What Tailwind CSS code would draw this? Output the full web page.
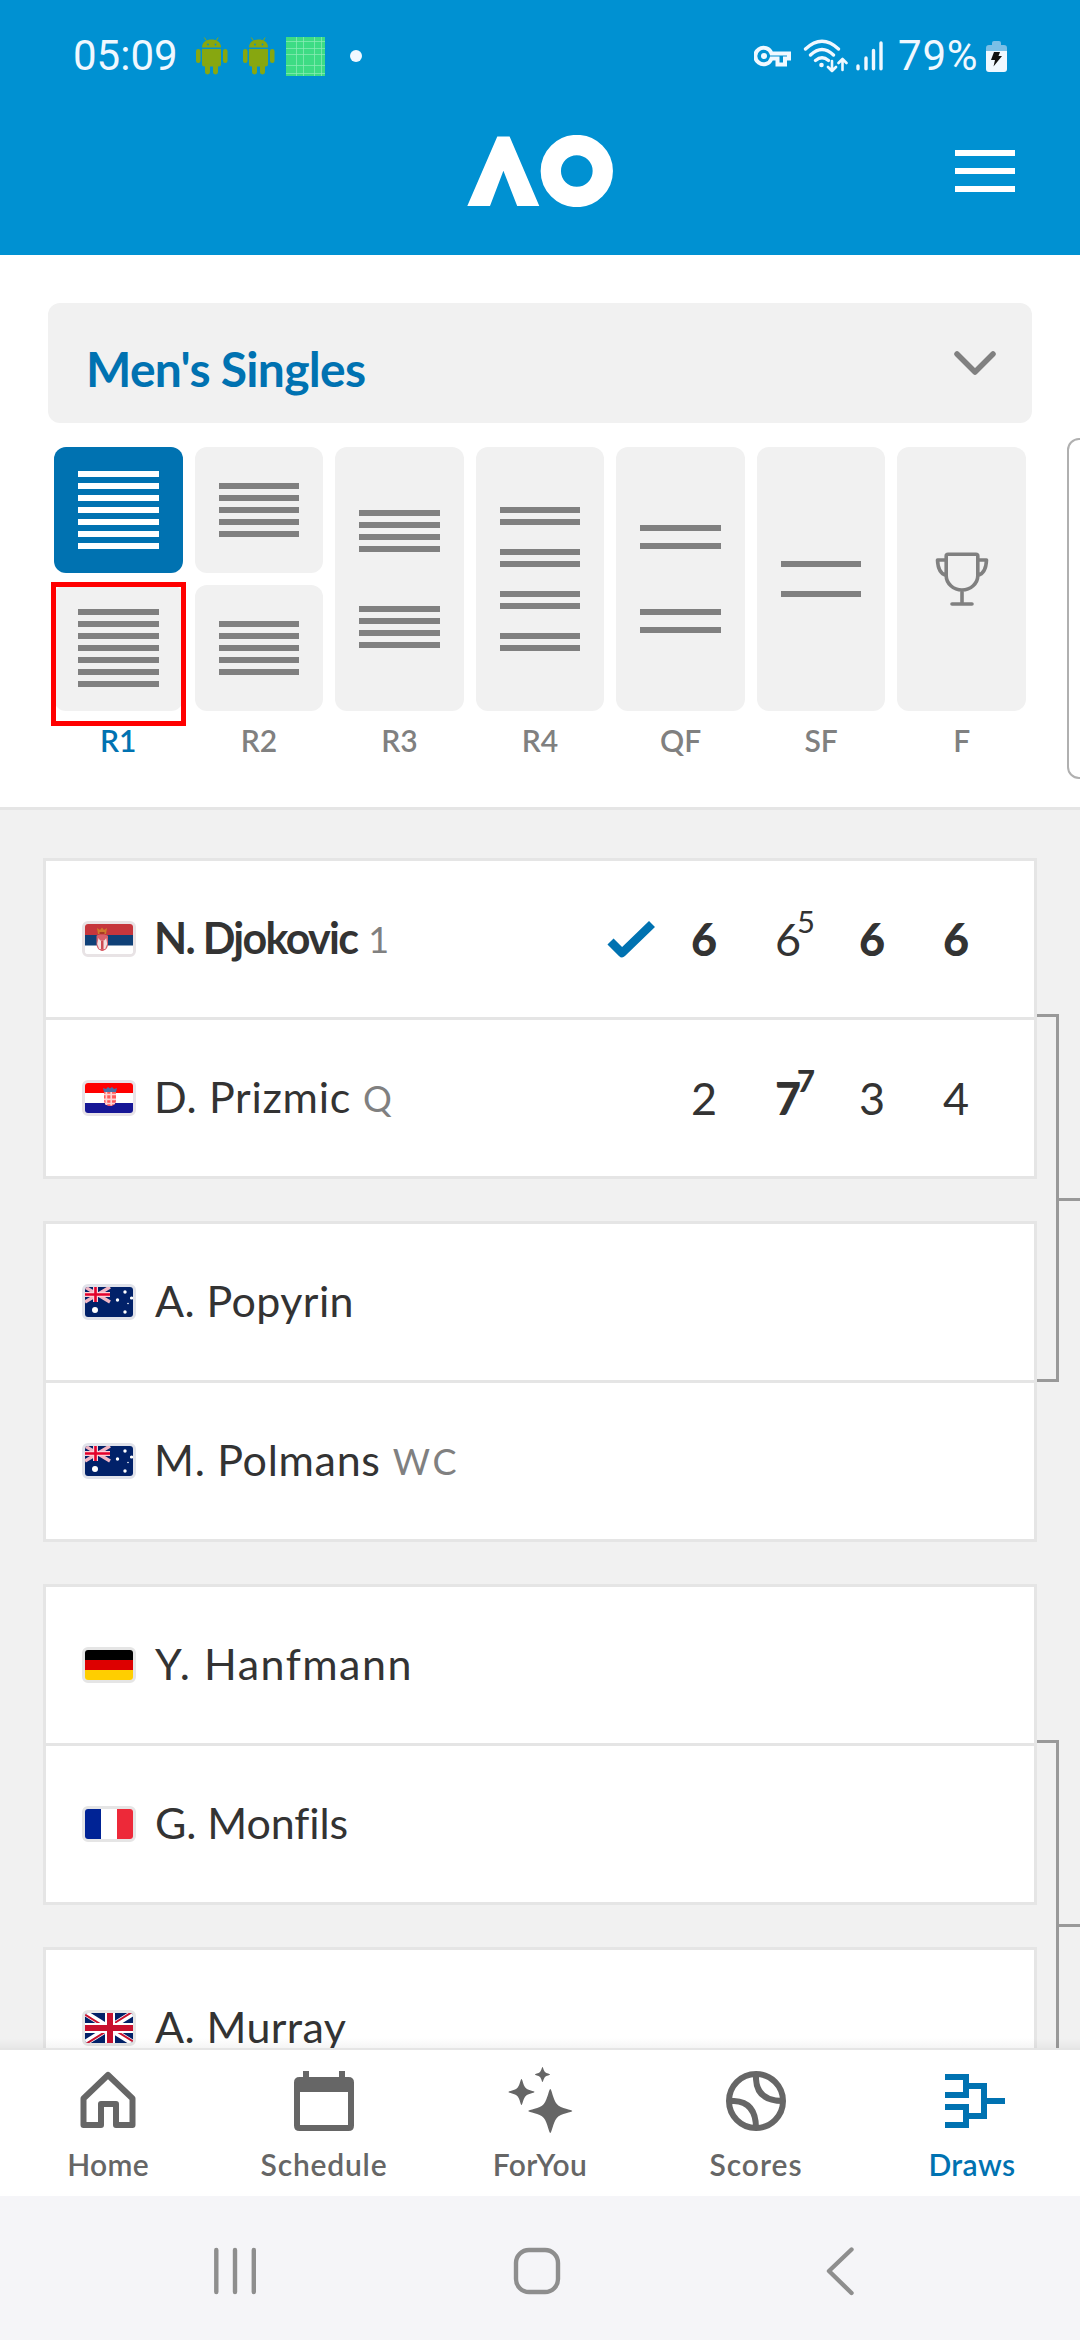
<!DOCTYPE html>
<html lang="en">
<head>
<meta charset="utf-8">
<title>Draws</title>
<script src="https://cdn.jsdelivr.net/npm/@tailwindcss/browser@4"></script>
</head>
<body class="w-[1080px] h-[2340px] overflow-hidden bg-white font-['Lato',sans-serif] text-[#333333] flex flex-col">
<svg class="hidden">
  <defs>
    <clipPath id="r"><rect width="48" height="30" rx="3"/></clipPath>
    <symbol id="srb" viewBox="0 0 48 30"><g clip-path="url(#r)"><path fill="#fff" d="M0 0h48v30H0z"/><path fill="#c6363c" d="M0 0h48v11H0z"/><path fill="#0f4077" d="M0 11h48v10.500H0z"/><path d="M11.500 12c0-2 11-2 11.500 0v8c0 5-4 7-5.700 7s-5.800-2-5.800-7z" fill="#d9606a"/><path d="M13.500 14c1 2 2 3 3.700 3s3-1 4-3l1 6-2 5h-6l-2-5z" fill="#f3dfe0"/><path d="M16 17h2.500v8H16z" fill="#cf4a52"/><path d="M12 4l3 2 2-2.500 2 2.500 3-2-1 6h-8z" fill="#d07a2c"/><path d="M14.500 8h5v2h-5z" fill="#a93a24"/></g></symbol>
    <symbol id="cro" viewBox="0 0 48 30"><g clip-path="url(#r)"><path fill="#fff" d="M0 0h48v30H0z"/><path fill="#f00" d="M0 0h48v10H0z"/><path fill="#171796" d="M0 20h48v10H0z"/><path d="M19 9h12v8c0 4-3 6-6 6s-6-2-6-6z" fill="#ff5a5a"/><path d="M21.400 9v13M26.200 9v13.500M19 11.500h12M19 16.300h12M20 20.500h10" stroke="#ffd2d2" stroke-width="1.700"/><path d="M18 5l3 1 2-2 2 1.500L27 4l2 2 3-1-1 4H19z" fill="#4a6fa5"/></g></symbol>
    <symbol id="uk" viewBox="0 0 48 30"><g clip-path="url(#r)"><path fill="#012169" d="M0 0h48v30H0z"/><path d="M0 0l48 30M48 0L0 30" stroke="#fff" stroke-width="6"/><path d="M0 1.500l24 15M48 28.500l-24-15M0 31.500l24-15M48-1.500l-24 15" stroke="#c8102e" stroke-width="2"/><path d="M25 0v30M0 15h48" stroke="#fff" stroke-width="10"/><path d="M25 0v30M0 15h48" stroke="#c8102e" stroke-width="6"/></g></symbol>
    <symbol id="aus" viewBox="0 0 48 30"><g clip-path="url(#r)"><path fill="#012169" d="M0 0h48v30H0z"/><path d="M0 0l25 15M25 0L0 15" stroke="#f3b6c4" stroke-width="3.400"/><path d="M10.500 0v15M0 7.500h25" stroke="#fbd0d8" stroke-width="5"/><path d="M10.500 0v15M0 7.500h25" stroke="#e4002b" stroke-width="2.600"/><g fill="#fff"><circle cx="10" cy="23" r="3"/><circle cx="40" cy="5" r="1.700"/><circle cx="32.500" cy="13" r="1.700"/><circle cx="46.500" cy="11" r="1.600"/><circle cx="40" cy="25" r="1.700"/><circle cx="43" cy="16.500" r=".8"/></g></g></symbol>
    <symbol id="ger" viewBox="0 0 48 30"><g clip-path="url(#r)"><path d="M0 0h48v10H0z"/><path fill="#d00" d="M0 10h48v10H0z"/><path fill="#ffce00" d="M0 20h48v10H0z"/></g></symbol>
    <symbol id="fra" viewBox="0 0 48 30"><g clip-path="url(#r)"><path fill="#fff" d="M0 0h48v30H0z"/><path fill="#002395" d="M0 0h16v30H0z"/><path fill="#ed2939" d="M32 0h16v30H32z"/></g></symbol>
    <symbol id="droid" viewBox="0 0 33 38"><g fill="#87a710"><path d="M7 10.500C7 5 11.500 2.500 16.500 2.500S26 5 26 10.500z"/><path d="M9.300.5l2.200 3.300M23.200.5L21 3.800" stroke="#87a710"/><path d="M7 12h19v15a2.500 2.500 0 0 1-2.500 2.500h-14A2.500 2.500 0 0 1 7 27z"/><rect x="1" y="12" width="4.500" height="14" rx="2.200"/><rect x="28" y="12" width="4.500" height="14" rx="2.200"/><rect x="10" y="26" width="5" height="11.500" rx="2.400"/><rect x="18" y="26" width="5" height="11.500" rx="2.400"/></g><g fill="#0091d2"><circle cx="13" cy="7.500" r=".9"/><circle cx="20.500" cy="7.500" r=".9"/></g></symbol>
  </defs>
</svg>

<!-- Status bar and app header -->
<header class="h-[255px] shrink-0 bg-[#0091d2] flex flex-col">
  <div class="h-28 flex items-center pl-[73px] pr-[73px] font-['Roboto',sans-serif] text-[42px] leading-none text-[#f0f8ff]">
    <span class="w-[105px]">05:09</span>
    <svg class="w-[33px] h-[38px] ml-[17px]"><use href="#droid"/></svg>
    <svg class="w-[33px] h-[38px] ml-[14px]"><use href="#droid"/></svg>
    <svg class="w-[39px] h-[39px] ml-[11px]" viewBox="0 0 39 39"><path fill="#3ddc84" d="M0 0h39v39H0z"/><path d="M10.500 0v39M17.500 0v39M28.500 0v39M35.500 0v39M0 11.500h39M0 17.500h39M0 28.500h39M0 36.500h39M0 4.500h39" stroke="#8fecb8" stroke-width=".7"/></svg>
    <span class="w-3 h-3 rounded-full bg-[#f0f8ff] ml-[25px]"></span>
    <svg class="w-[37px] h-[22px] ml-auto" viewBox="0 0 37 22" fill="none" stroke="#f0f8ff" stroke-width="4"><path d="M17.500 8.500A8.300 8.300 0 1 0 17.500 13.500H23.500V19.500H31V13.500H35V8.500Z"/><circle cx="10" cy="11" r="3" fill="#f0f8ff" stroke="none"/></svg>
    <svg class="w-[45px] h-[34px] ml-[12px]" viewBox="0 0 45 34" fill="none" stroke="#f0f8ff" stroke-linecap="round" stroke-linejoin="round"><path d="M2.500 10Q19-5.500 35.500 10M7.500 16Q19 5 30.500 16M12.500 21.500Q19 16 25.500 21.500" stroke-width="3.300"/><circle cx="18.500" cy="26" r="2.300" fill="#f0f8ff" stroke="none"/><path d="M29 22v10M25 28l4 4 4-4M39.500 31V20M35.500 24l4-4 4 4" stroke-width="2.600"/></svg>
    <svg class="w-[27px] h-[30px] ml-[8px]" viewBox="0 0 27 30" stroke="#f0f8ff" stroke-width="3.400" stroke-linecap="round"><path d="M2 25v2.800M10 17v10.800M17.500 9.500v18.300M25 2v25.800"/></svg>
    <span class="ml-[15px] w-[80px] tracking-[0.8px]">79%</span>
    <svg class="w-[21px] h-[31px] ml-[8px]" viewBox="0 0 21 31"><path d="M6 2q0-2 2-2h5q2 0 2 2v2h3q3 0 3 3v5H0V7q0-3 3-3h3z" fill="#7bbfe6"/><path d="M0 10h21v18q0 3-3 3H3q-3 0-3-3z" fill="#f0f8ff"/><path d="M8 11h6l-1.500 4H16L7.500 25.500 9 19H5z" fill="#111"/></svg>
  </div>
  <div class="h-[143px] flex items-start justify-between pl-[467px] pr-[65px] pt-[23px]">
    <svg class="w-[146px] h-[72px]" viewBox="467 135 146 72" fill="#fff"><path d="M497.300 136.500h12.300L539.300 206H517.200L503.400 170.700 490 206H467.300z"/><circle cx="576.800" cy="171" r="26" fill="none" stroke="#fff" stroke-width="20.300"/></svg>
    <div class="w-[60px] flex flex-col gap-3 pt-[15px]"><i class="h-1.5 bg-white"></i><i class="h-1.5 bg-white"></i><i class="h-1.5 bg-white"></i></div>
  </div>
</header>

<!-- Draw picker -->
<section class="relative h-[555px] shrink-0 bg-white border-b-3 border-[#e5e5e5] px-12 pt-12">
  <div class="h-[120px] rounded-xl bg-[#f1f1f1] flex items-center justify-between pl-[38px] pr-[36px] text-[#0072b1]">
    <span class="text-[48px] font-bold pt-3 leading-none tracking-[-0.7px]">Men's Singles</span>
    <svg class="w-[42px] h-[24px]" viewBox="0 0 42 24" fill="none" stroke="#808080" stroke-width="5.500" stroke-linecap="round" stroke-linejoin="round"><path d="M3 3l18 18L39 3"/></svg>
  </div>
  <div class="mt-6 px-1.5 grid grid-cols-7 gap-3">
    <div class="h-[264px] flex flex-col gap-3">
      <div class="flex-1 rounded-xl bg-[#0072b1] px-6 flex flex-col justify-center gap-1.5"><i class="h-1.5 bg-white"></i><i class="h-1.5 bg-white"></i><i class="h-1.5 bg-white"></i><i class="h-1.5 bg-white"></i><i class="h-1.5 bg-white"></i><i class="h-1.5 bg-white"></i><i class="h-1.5 bg-white"></i></div>
      <div class="relative flex-1 rounded-xl bg-[#f1f1f1] px-6 flex flex-col justify-center gap-1.5"><i class="h-1.5 bg-[#808080]"></i><i class="h-1.5 bg-[#808080]"></i><i class="h-1.5 bg-[#808080]"></i><i class="h-1.5 bg-[#808080]"></i><i class="h-1.5 bg-[#808080]"></i><i class="h-1.5 bg-[#808080]"></i><i class="h-1.5 bg-[#808080]"></i>
        <b class="absolute -left-[3px] -top-[3px] w-[135px] h-[144px] border-5 border-[#ff0000]"></b></div>
    </div>
    <div class="h-[264px] flex flex-col gap-3">
      <div class="flex-1 rounded-xl bg-[#f1f1f1] px-6 flex flex-col justify-center gap-1.5"><i class="h-1.5 bg-[#808080]"></i><i class="h-1.5 bg-[#808080]"></i><i class="h-1.5 bg-[#808080]"></i><i class="h-1.5 bg-[#808080]"></i><i class="h-1.5 bg-[#808080]"></i></div>
      <div class="flex-1 rounded-xl bg-[#f1f1f1] px-6 flex flex-col justify-center gap-1.5"><i class="h-1.5 bg-[#808080]"></i><i class="h-1.5 bg-[#808080]"></i><i class="h-1.5 bg-[#808080]"></i><i class="h-1.5 bg-[#808080]"></i><i class="h-1.5 bg-[#808080]"></i></div>
    </div>
    <div class="h-[264px] rounded-xl bg-[#f1f1f1] px-6 flex flex-col justify-center gap-[54px]">
      <div class="flex flex-col gap-1.5"><i class="h-1.5 bg-[#808080]"></i><i class="h-1.5 bg-[#808080]"></i><i class="h-1.5 bg-[#808080]"></i><i class="h-1.5 bg-[#808080]"></i></div>
      <div class="flex flex-col gap-1.5"><i class="h-1.5 bg-[#808080]"></i><i class="h-1.5 bg-[#808080]"></i><i class="h-1.5 bg-[#808080]"></i><i class="h-1.5 bg-[#808080]"></i></div>
    </div>
    <div class="h-[264px] rounded-xl bg-[#f1f1f1] px-6 flex flex-col justify-center gap-6">
      <div class="h-[18px] border-y-6 border-[#808080]"></div><div class="h-[18px] border-y-6 border-[#808080]"></div><div class="h-[18px] border-y-6 border-[#808080]"></div><div class="h-[18px] border-y-6 border-[#808080]"></div>
    </div>
    <div class="h-[264px] rounded-xl bg-[#f1f1f1] px-6 flex flex-col justify-center gap-[60px]">
      <div class="h-6 border-y-6 border-[#808080]"></div><div class="h-6 border-y-6 border-[#808080]"></div>
    </div>
    <div class="h-[264px] rounded-xl bg-[#f1f1f1] px-6 flex flex-col justify-center"><div class="h-9 border-y-6 border-[#808080]"></div></div>
    <div class="h-[264px] rounded-xl bg-[#f1f1f1] flex items-center justify-center">
      <svg class="w-[54px] h-[54px]" viewBox="0 0 54 54" fill="none" stroke="#808080" stroke-width="3.600" stroke-linecap="round" stroke-linejoin="round"><path d="M13 2.300h28q1.800 0 1.800 1.800v19.400a15.800 14.500 0 0 1-31.600 0V4.100q0-1.800 1.800-1.800zM11 8H2.500c.3 8 3 14 8.700 15.500M43 8h8.500c-.3 8-3 14-8.700 15.500M27 38v14M17 52h20"/></svg>
    </div>
  </div>
  <div class="mt-[11px] px-1.5 grid grid-cols-7 gap-3 text-center text-[30px] leading-[36px] font-semibold text-[#808080]">
    <span class="text-[#0072b1]">R1</span><span>R2</span><span>R3</span><span>R4</span><span>QF</span><span>SF</span><span>F</span>
  </div>
  <div class="absolute left-[1067px] top-[183px] w-10 h-[341px] rounded-xl border-2 border-[#b0b0b0]"></div>
</section>

<!-- Match list -->
<main class="relative h-[1238px] shrink-0 overflow-hidden bg-[#f1f1f1] px-[43px] pt-12 flex flex-col gap-[42px] text-[43px] leading-[52px]">
  <div class="absolute left-[1037px] top-[204px] w-[22px] h-[368px] border-3 border-l-0 border-[#999999]"></div>
  <div class="absolute left-[1059px] top-[388px] w-6 h-[3px] bg-[#999999]"></div>
  <div class="absolute left-[1037px] top-[930px] w-[22px] h-[368px] border-3 border-l-0 border-[#999999]"></div>
  <div class="absolute left-[1059px] top-[1114px] w-6 h-[3px] bg-[#999999]"></div>

  <article class="w-[994px] h-[321px] shrink-0 bg-white border-3 border-[#e5e5e5] divide-y-3 divide-[#e5e5e5]">
    <div class="h-[159px] flex items-center pl-9 pr-9">
      <svg class="w-[54px] h-9 rounded-md border-3 border-[#e8e3e5]"><use href="#srb"/></svg>
      <span class="ml-[18px] pb-0.5 font-bold tracking-[-1.7px]">N. Djokovic</span><span class="ml-[11px] pb-px text-[36px] text-[#808080]">1</span>
      <svg class="w-12 h-[38px] ml-auto mr-[7px]" viewBox="0 0 48 38"><path d="M3.500 21.500L15 33 45 4" fill="none" stroke="#0072b1" stroke-width="8.600" stroke-linejoin="round"/></svg>
      <span class="w-[84px] text-center text-[45px] font-black">6</span>
      <span class="relative w-[84px] text-center text-[45px]">6<sup class="absolute left-[51px] -top-[10px] text-[31px] leading-[36px]">5</sup></span>
      <span class="w-[84px] text-center text-[45px] font-black">6</span>
      <span class="w-[84px] text-center text-[45px] font-black">6</span>
    </div>
    <div class="h-[156px] flex items-center pl-9 pr-9">
      <svg class="w-[54px] h-9 rounded-md border-3 border-[#e8e3e8]"><use href="#cro"/></svg>
      <span class="ml-[18px] pb-0.5 tracking-[0.7px]">D. Prizmic</span><span class="ml-[12px] text-[36px] text-[#808080]">Q</span>
      <span class="w-[84px] ml-auto text-center text-[45px]">2</span>
      <span class="relative w-[84px] text-center text-[45px] font-black">7<sup class="absolute left-[51px] -top-[10px] text-[31px] leading-[36px]">7</sup></span>
      <span class="w-[84px] text-center text-[45px]">3</span>
      <span class="w-[84px] text-center text-[45px]">4</span>
    </div>
  </article>

  <article class="w-[994px] h-[321px] shrink-0 bg-white border-3 border-[#e5e5e5] divide-y-3 divide-[#e5e5e5]">
    <div class="h-[159px] flex items-center pl-9">
      <svg class="w-[54px] h-9 rounded-md border-3 border-[#e0e2ea]"><use href="#aus"/></svg>
      <span class="ml-[19px] pb-0.5 tracking-[0.4px]">A. Popyrin</span>
    </div>
    <div class="h-[156px] flex items-center pl-9">
      <svg class="w-[54px] h-9 rounded-md border-3 border-[#e0e2ea]"><use href="#aus"/></svg>
      <span class="ml-[18px] pb-0.5 tracking-[0.7px]">M. Polmans</span><span class="ml-[12px] text-[36px] tracking-[3px] text-[#808080]">WC</span>
    </div>
  </article>

  <article class="w-[994px] h-[321px] shrink-0 bg-white border-3 border-[#e5e5e5] divide-y-3 divide-[#e5e5e5]">
    <div class="h-[159px] flex items-center pl-9">
      <svg class="w-[54px] h-9 rounded-md border-3 border-[#e5e5e5]"><use href="#ger"/></svg>
      <span class="ml-[19px] pb-0.5 tracking-[1.5px]">Y. Hanfmann</span>
    </div>
    <div class="h-[156px] flex items-center pl-9">
      <svg class="w-[54px] h-9 rounded-md border-3 border-[#e5e5e5]"><use href="#fra"/></svg>
      <span class="ml-[19px] pb-0.5 tracking-[-0.1px]">G. Monfils</span>
    </div>
  </article>

  <article class="w-[994px] h-[321px] shrink-0 bg-white border-3 border-[#e5e5e5]">
    <div class="h-[156px] flex items-center pl-9">
      <svg class="w-[54px] h-9 rounded-md border-3 border-[#e5e5e5]"><use href="#uk"/></svg>
      <span class="ml-[19px] pb-0.5 tracking-[0.4px]">A. Murray</span>
    </div>
  </article>
  <div class="absolute left-0 bottom-0 w-full h-2.5 bg-linear-to-b from-black/0 to-black/4"></div>
</main>

<!-- Tab bar -->
<nav class="h-[148px] shrink-0 bg-white border-t-2 border-[#e5e5e5] grid grid-cols-5 text-center text-[30px] leading-[36px] font-semibold text-[#666666]">
  <div class="flex flex-col items-center pt-[17px]">
    <svg class="w-[72px] h-[72px]" viewBox="72 2067 72 72" fill="none" stroke="#666" stroke-width="6" stroke-linejoin="round"><path d="M83.500 2098.500L108 2075l24.500 23.500v26.500H116v-21h-15v21H83.500z"/></svg>
    <span class="mt-[7px] tracking-[0.3px]">Home</span>
  </div>
  <div class="flex flex-col items-center pt-[17px]">
    <svg class="w-[72px] h-[72px]" viewBox="288 2067 72 72"><path fill="#666" fill-rule="evenodd" d="M303 2071h6v6h30v-6h6v6h3.500q5.500 0 5.500 5.500v43q0 5.500-5.500 5.500h-49q-5.500 0-5.500-5.500v-43q0-5.500 5.500-5.500h3.500zM300 2092v33h48v-33z"/></svg>
    <span class="mt-[7px] tracking-[0.8px]">Schedule</span>
  </div>
  <div class="flex flex-col items-center pt-[17px]">
    <svg class="w-[72px] h-[72px]" viewBox="504 2067 72 72" fill="#666"><path d="M550.300 2089c1.500 0 2.500 10 6.500 15s15.500 5.500 15.500 7-11.500 2-15.500 7-5 15-6.500 15-2.500-10-6.500-15-15.500-5.500-15.500-7 11.500-2 15.500-7 5-15 6.500-15zM521.500 2079c1 0 1.500 6 4 8.800s9 3.200 9 4.200-6.500 1.400-9 4.200-3 8.800-4 8.800-1.500-6-4-8.800-9-3.200-9-4.200 6.500-1.400 9-4.200 3-8.800 4-8.800zM542.500 2067c.7 0 1 3.500 2.500 5s5 1.800 5 2.500-3.500 1-5 2.500-1.800 5-2.500 5-1-3.500-2.500-5-5-1.800-5-2.500 3.500-1 5-2.500 1.800-5 2.500-5z"/></svg>
    <span class="mt-[7px] tracking-[0.4px]">ForYou</span>
  </div>
  <div class="flex flex-col items-center pt-[17px]">
    <svg class="w-[72px] h-[72px]" viewBox="720 2067 72 72" fill="none" stroke="#666" stroke-width="6"><circle cx="756" cy="2101" r="27"/><path d="M756 2074v5q1 22 27 22M729 2101h5q22 1 22 27"/></svg>
    <span class="mt-[7px] tracking-[1px]">Scores</span>
  </div>
  <div class="flex flex-col items-center pt-[17px] text-[#0072b1]">
    <svg class="w-[84px] h-[72px]" viewBox="930 2067 84 72" fill="none" stroke="#0072b1" stroke-width="6"><path d="M945 2077h21v18h-21M945 2107h21v18h-21M966 2086h18v30h-18M984 2101h21"/></svg>
    <span class="mt-[7px] tracking-[0.4px]">Draws</span>
  </div>
</nav>

<!-- System navigation -->
<footer class="h-[144px] shrink-0 bg-[#f5f5f8]">
  <svg class="w-full h-full" viewBox="0 2196 1080 144" fill="none" stroke="#8e8e8e" stroke-width="4.400" stroke-linecap="round" stroke-linejoin="round"><path d="M216.300 2250v42M235 2250v42M253.800 2250v42M851.500 2249.500L829 2271l22.500 22"/><rect x="516" y="2250" width="42" height="42" rx="13"/></svg>
</footer>
</body>
</html>
